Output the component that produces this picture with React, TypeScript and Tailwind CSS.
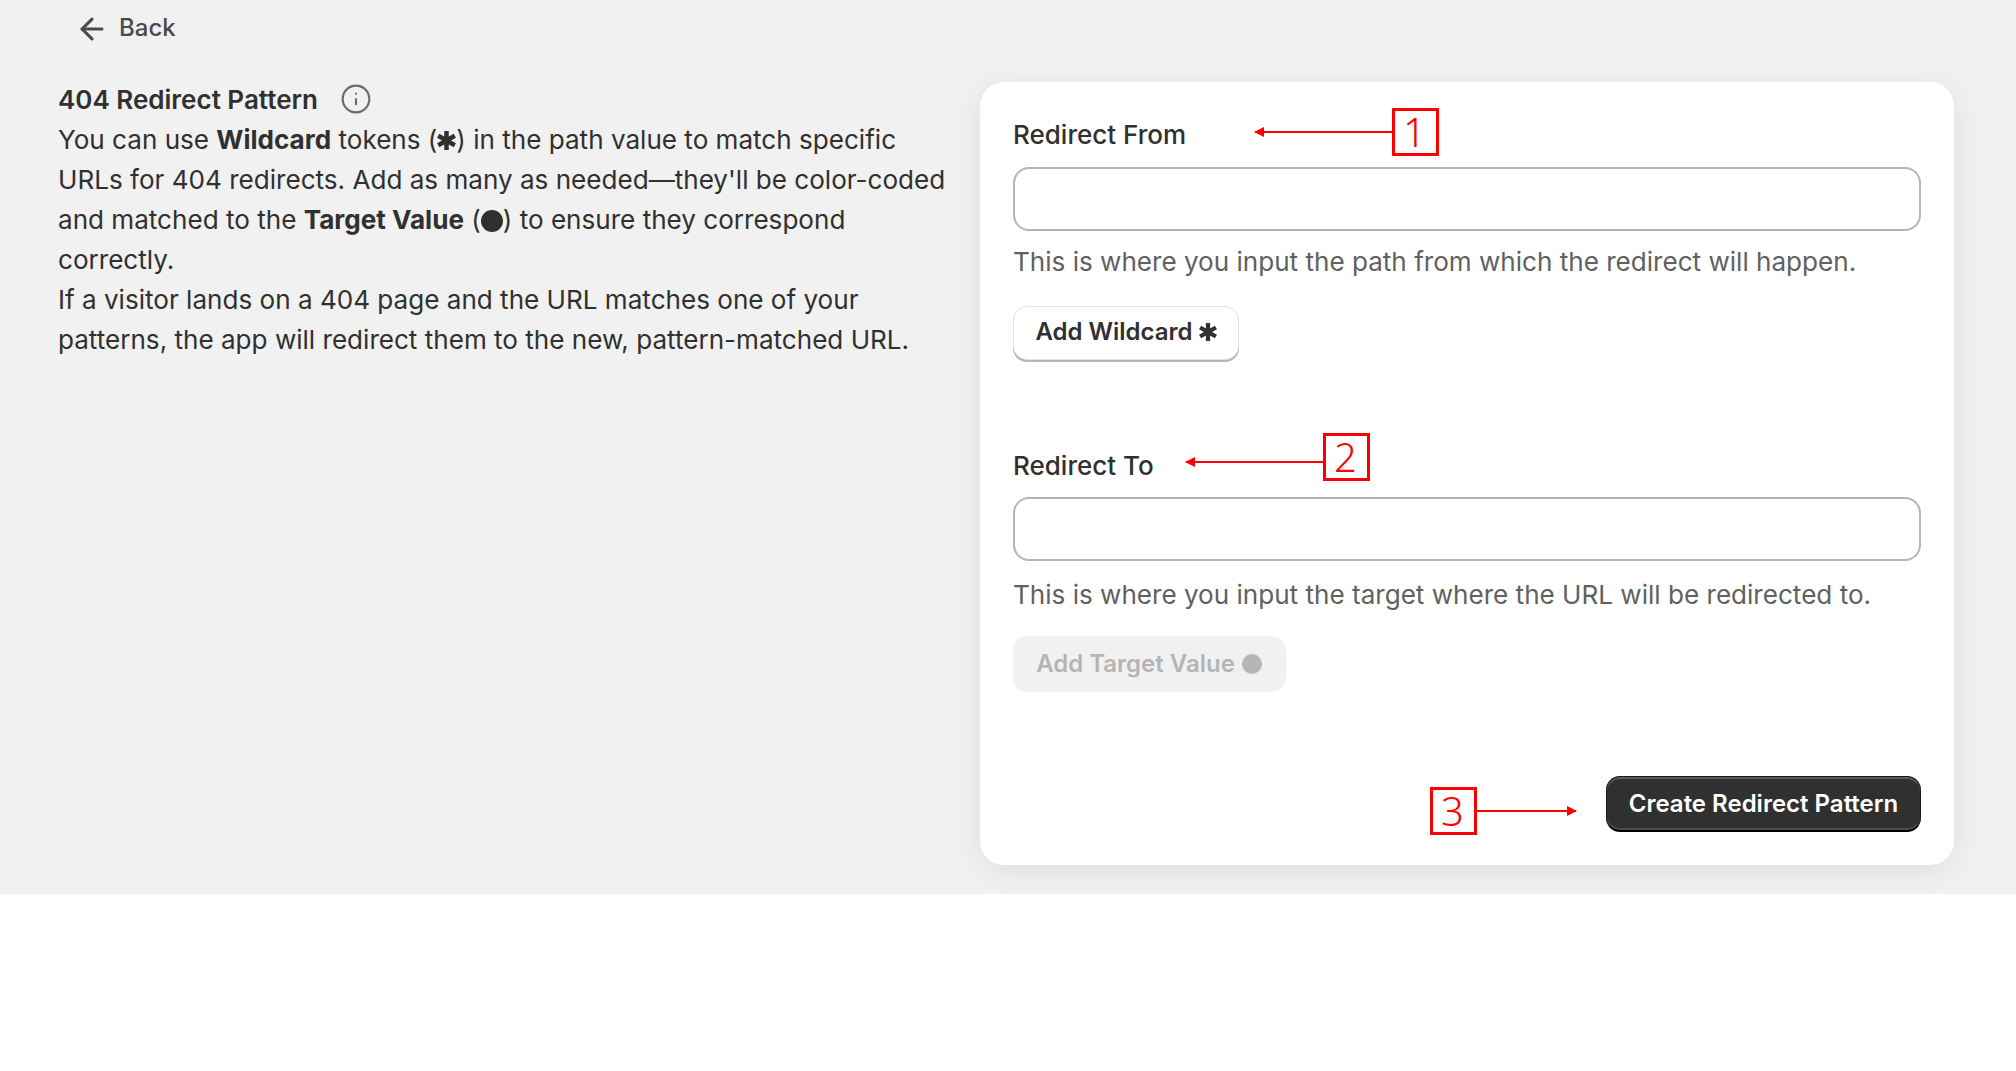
import React from 'react';
import { ArrowLeft, Info } from 'lucide-react';

function Asterisk({ className }: { className: string }) {
  return (
    <svg viewBox="0 0 16 16" className={className} fill="none" stroke="currentColor" strokeWidth="3.8" strokeLinecap="butt">
      <path d="M8 0v16M1 4l14 8M15 4L1 12" />
    </svg>
  );
}

function Callout({ n, className, arrowClass, dir }: { n: string; className: string; arrowClass: string; dir: 'left' | 'right' }) {
  return (
    <>
      <div className={`absolute w-[47px] h-[48px] border-[3px] border-[#ff0000] flex items-center justify-center pr-[2px] text-[#ff0000] text-[40px] font-light font-['Noto_Sans',sans-serif] leading-none ${className}`}>
        {n}
      </div>
      <div className={`absolute h-[2px] bg-[#ff0000] ${arrowClass}`}>
        {dir === 'left' ? (
          <div className="absolute -left-px -top-[4px] w-0 h-0 border-y-[5px] border-y-transparent border-r-[10px] border-r-[#ff0000]" />
        ) : (
          <div className="absolute -right-px -top-[4px] w-0 h-0 border-y-[5px] border-y-transparent border-l-[10px] border-l-[#ff0000]" />
        )}
      </div>
    </>
  );
}

export default function App() {
  return (
    <div className="min-h-screen bg-white font-['Inter',sans-serif] text-[#303030]">
      <div className="h-[894px] bg-[#f1f1f1] flex overflow-hidden">
        <div className="w-[980px] shrink-0 pl-[58px] pr-[24px]">
          <div className="flex items-center gap-[10px] pl-[17px] pt-[10px] h-[46px] text-[24px] font-medium text-[#4a4a4a]">
            <ArrowLeft className="w-[34px] h-[34px] mt-[2px]" strokeWidth={2.2} />
            <span>Back</span>
          </div>
          <div className="mt-[33px] flex items-center h-[40px] text-[26px] font-semibold">
            <span>404 Redirect Pattern</span>
            <Info className="ml-[22px] w-[32px] h-[32px] text-[#6b6b6b]" strokeWidth={1.6} />
          </div>
          <p className="mt-[1px] text-[26.08px] leading-[40px]">
            You can use <b className="font-bold">Wildcard</b> tokens (<Asterisk className="inline w-[19px] h-[19px] -mt-[3px]" />) in the path value to match specific URLs for 404 redirects. Add as many as needed—they'll be color-coded and matched to the <b className="font-bold">Target Value</b> (<span className="inline-block w-[22px] h-[22px] rounded-full bg-[#303030] align-[-3px]" />) to ensure they correspond correctly.
            <br />
            If a visitor lands on a 404 page and the URL matches one of your patterns, the app will redirect them to the new, pattern-matched URL.
          </p>
        </div>
        <div className="relative mt-[82px] w-[974px] h-[783px] bg-white rounded-[24px] px-[33px] pt-[33px] shadow-[0_6px_30px_rgba(0,0,0,0.08)]">
          <label className="block text-[26px] leading-[40px] font-medium">Redirect From</label>
          <input className="mt-[12px] block w-full h-[64px] rounded-[16px] border-2 border-[#b5b5b5] bg-white" />
          <p className="mt-[11px] text-[26.08px] leading-[40px] text-[#616161]">This is where you input the path from which the redirect will happen.</p>
          <button className="mt-[24px] h-[54px] w-[226px] rounded-[14px] bg-white border border-[#e3e3e3] shadow-[0_2px_0_#b5b5b5] flex items-center justify-center gap-[6px] pb-[3px] text-[24px] font-semibold">
            Add Wildcard <Asterisk className="w-[18px] h-[18px]" />
          </button>
          <label className="mt-[86px] block text-[26px] leading-[40px] font-medium">Redirect To</label>
          <input className="mt-[11px] block w-full h-[64px] rounded-[16px] border-2 border-[#b5b5b5] bg-white" />
          <p className="mt-[14px] text-[26.08px] leading-[40px] text-[#616161]">This is where you input the target where the URL will be redirected to.</p>
          <button className="mt-[21px] h-[56px] w-[273px] rounded-[14px] bg-[#f1f1f1] flex items-center justify-center gap-[7px] pr-[1px] text-[24px] font-semibold text-[#b5b5b5]">
            Add Target Value <span className="w-[20px] h-[20px] rounded-full bg-[#b5b5b5]" />
          </button>
          <div className="mt-[84px] flex justify-end">
            <button className="h-[56px] w-[315px] rounded-[14px] bg-[#303030] border border-[#1a1a1a] border-b-2 border-b-black shadow-[inset_0_2px_0_#5a5a5a,inset_0_-2px_0_#4a4a4a] text-white text-[24px] font-semibold">
              Create Redirect Pattern
            </button>
          </div>
          <Callout n="1" dir="left" className="left-[412px] top-[26px]" arrowClass="left-[275px] top-[49px] w-[137px]" />
          <Callout n="2" dir="left" className="left-[343px] top-[351px]" arrowClass="left-[206px] top-[379px] w-[137px]" />
          <Callout n="3" dir="right" className="left-[450px] top-[705px]" arrowClass="left-[497px] top-[728px] w-[99px]" />
        </div>
      </div>
    </div>
  );
}
